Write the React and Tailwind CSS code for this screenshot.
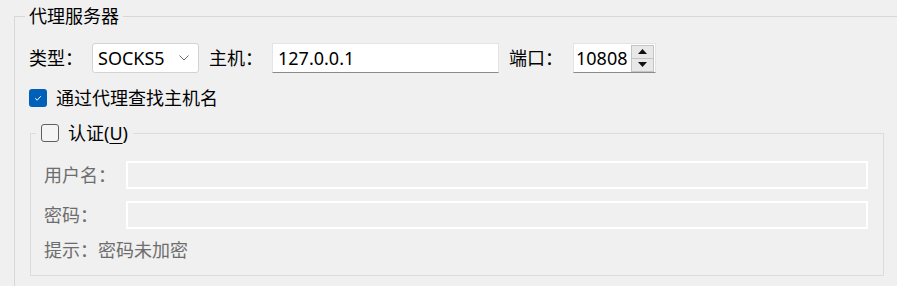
import React from "react";

const Chevron = () => (
  <svg width="10" height="6" viewBox="0 0 10 6" className="block">
    <polyline points="0.5,0.5 5,5 9.5,0.5" fill="none" stroke="#6b6b6b" strokeWidth="1" />
  </svg>
);

const Arrow = ({ up }) => (
  <svg width="9" height="5" viewBox="0 0 9 5" className="block">
    <polygon points={up ? "4.5,0 9,5 0,5" : "0,0 9,0 4.5,5"} fill="#111" />
  </svg>
);

const CheckBox = ({ checked }) =>
  checked ? (
    <span className="flex h-[18px] w-[18px] items-center justify-center rounded-[3px] bg-[#005fb8]">
      <svg width="18" height="18" viewBox="0 0 18 18">
        <path d="M6.2 9.3 L8.2 11.2 L11.8 7.2" fill="none" stroke="#fff" strokeWidth="1" />
      </svg>
    </span>
  ) : (
    <span className="block h-[18px] w-[18px] rounded-[3px] border border-[#5f5f5f] bg-[#f4f4f4]" />
  );

const DisabledRow = ({ label }) => (
  <div className="flex h-[28px] items-center">
    <span className="w-[82px] text-[#6d6d6d]">{label}</span>
    <div className="h-[28px] flex-1 border-2 border-white bg-[#f0f0f0]" />
  </div>
);

export default function App() {
  return (
    <div className="h-[286px] w-[897px] overflow-hidden bg-[#f0f0f0] pl-[14px] pt-[4px] font-['Noto_Sans','Noto_Sans_CJK_SC',sans-serif] text-[18px] leading-[24px] text-black">
      <fieldset className="h-[330px] w-[900px] border border-[#d7d7d7] pl-[14px] pt-[15px]">
        <legend className="-ml-[4px] px-[4px] leading-[24px]">代理服务器</legend>

        <div className="flex h-[30px] items-center">
          <span>类型：</span>
          <div className="ml-[9px] flex h-[30px] w-[107px] items-center justify-between rounded-[3px] border border-[#d3d3d3] bg-white pl-[5px] pr-[9px]">
            <span>SOCKS5</span>
            <Chevron />
          </div>
          <span className="ml-[10px]">主机：</span>
          <div className="ml-[9px] flex h-[30px] w-[227px] items-center border border-[#e4e4e4] border-b-[#8a8a8a] bg-white pl-[5px]">
            127.0.0.1
          </div>
          <span className="ml-[10px]">端口：</span>
          <div className="ml-[10px] flex h-[30px] w-[83px] items-center border border-[#e4e4e4] border-b-[#8a8a8a] bg-white pl-[2px] pr-[1px]">
            <span className="flex-1">10808</span>
            <div className="flex h-[27px] w-[23px] flex-col">
              <div className="flex flex-1 items-center justify-center border border-[#c4c4c4] bg-[#e8e8e8]">
                <Arrow up />
              </div>
              <div className="flex flex-1 items-center justify-center border border-t-0 border-[#c4c4c4] bg-[#e8e8e8]">
                <Arrow />
              </div>
            </div>
          </div>
        </div>

        <div className="mt-[13px] flex items-center">
          <CheckBox checked />
          <span className="ml-[9px]">通过代理查找主机名</span>
        </div>

        <fieldset className="ml-[1px] mt-[11px] w-[854px] border border-[#dcdcdc] pb-[13px] pl-[13px] pr-[15px] pt-[16px]">
          <legend className="-ml-[8px] flex items-center px-[5px] leading-[24px]">
            <CheckBox />
            <span className="ml-[9px]">
              认证(<span className="underline underline-offset-[3px]">U</span>)
            </span>
          </legend>
          <DisabledRow label="用户名：" />
          <div className="mt-[12px]">
            <DisabledRow label="密码：" />
          </div>
          <div className="mt-[9px] text-[#6d6d6d]">提示：密码未加密</div>
        </fieldset>
      </fieldset>
    </div>
  );
}
